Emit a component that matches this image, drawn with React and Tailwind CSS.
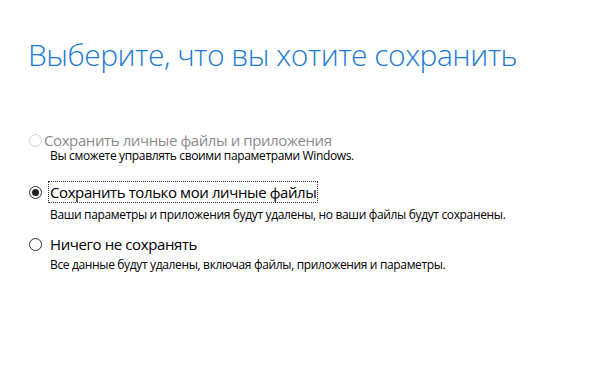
const Radio = ({ checked, disabled }) => (
  <span
    className={`flex h-[13px] w-[13px] shrink-0 items-center justify-center rounded-full border ${
      disabled ? 'border-[#cfcfcf]' : 'border-[#333333]'
    }`}
  >
    {checked && <span className="h-[7px] w-[7px] rounded-full bg-[#222222]" />}
  </span>
);

export default function App() {
  return (
    <div className="h-[381px] w-[606px] overflow-hidden bg-white pl-[28px] pt-[35px] font-['Open_Sans',sans-serif] text-black">
      <h1 className="text-[30px] font-light leading-[40px] tracking-[-0.5px] text-[#1a7ad6]">
        Выберите, что вы хотите сохранить
      </h1>

      <div className="mt-[57px] flex items-center pl-[1px]">
        <Radio disabled />
        <span className="ml-[2px] text-[15px] leading-[16px] tracking-[-0.4px] text-[#8c8c8c]">
          Сохранить личные файлы и приложения
        </span>
      </div>
      <p className="mt-[1px] pl-[22px] text-[12px] leading-[14px] tracking-[-0.35px]">
        Вы сможете управлять своими параметрами Windows.
      </p>

      <div className="mt-[18px] flex items-center pl-[1px]">
        <Radio checked />
        <span className="ml-[6px] border border-dotted border-[#333333] px-[1px] py-[1px] text-[15px] leading-[18px] tracking-[-0.4px]">
          Сохранить только мои личные файлы
        </span>
      </div>
      <p className="mt-[5px] pl-[22px] text-[12px] leading-[14px] tracking-[-0.35px]">
        Ваши параметры и приложения будут удалены, но ваши файлы будут сохранены.
      </p>

      <div className="mt-[13px] flex items-center pl-[1px]">
        <Radio />
        <span className="ml-[8px] text-[15px] leading-[18px] tracking-[-0.4px]">Ничего не сохранять</span>
      </div>
      <p className="mt-[5px] pl-[22px] text-[12px] leading-[14px] tracking-[-0.35px]">
        Все данные будут удалены, включая файлы, приложения и параметры.
      </p>
    </div>
  );
}
